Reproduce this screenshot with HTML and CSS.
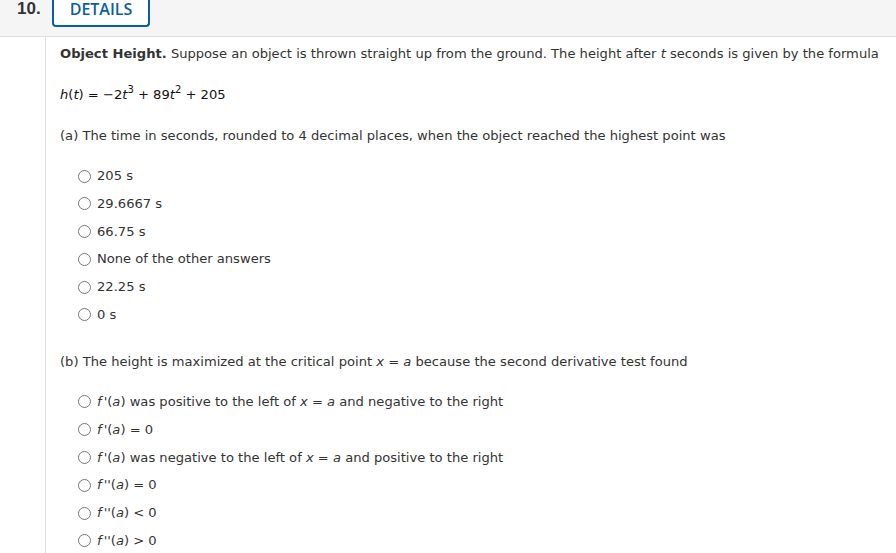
FILE: index.html
```html
<!DOCTYPE html>
<html>
<head>
<meta charset="utf-8">
<link rel="stylesheet" href="styles.css">
</head>
<body>
<div class="header">
  <span class="qnum">10.</span>
  <span class="details">DETAILS</span>
</div>
<div class="content">
  <p class="line first"><b>Object Height.</b> Suppose an object is thrown straight up from the ground. The height after <i>t</i> seconds is given by the formula</p>
  <p class="line formula"><i>h</i>(<i>t</i>) = −2<i>t</i><sup>3</sup> + 89<i>t</i><sup>2</sup> + 205</p>
  <p class="line part">(a) The time in seconds, rounded to 4 decimal places, when the object reached the highest point was</p>
  <ul class="opts">
    <li><span class="radio"></span><span class="label">205 s</span></li>
    <li><span class="radio"></span><span class="label">29.6667 s</span></li>
    <li><span class="radio"></span><span class="label">66.75 s</span></li>
    <li><span class="radio"></span><span class="label">None of the other answers</span></li>
    <li><span class="radio"></span><span class="label">22.25 s</span></li>
    <li><span class="radio"></span><span class="label">0 s</span></li>
  </ul>
  <p class="line part b">(b) The height is maximized at the critical point <i>x</i> = <i>a</i> because the second derivative test found</p>
  <ul class="opts">
    <li><span class="radio"></span><span class="label"><i class="fn">f</i>'(<i>a</i>) was positive to the left of <i>x</i> = <i>a</i> and negative to the right</span></li>
    <li><span class="radio"></span><span class="label"><i class="fn">f</i>'(<i>a</i>) = 0</span></li>
    <li><span class="radio"></span><span class="label"><i class="fn">f</i>'(<i>a</i>) was negative to the left of <i>x</i> = <i>a</i> and positive to the right</span></li>
    <li><span class="radio"></span><span class="label"><i class="fn">f</i>''(<i>a</i>) = 0</span></li>
    <li><span class="radio"></span><span class="label"><i class="fn">f</i>''(<i>a</i>) &lt; 0</span></li>
    <li><span class="radio"></span><span class="label"><i class="fn">f</i>''(<i>a</i>) &gt; 0</span></li>
  </ul>
</div>
</body>
</html>
```
FILE: styles.css
```css
html, body {
  margin: 0;
  padding: 0;
  background: #fff;
}
body {
  font-family: "DejaVu Sans", Verdana, sans-serif;
  color: #333;
  font-size: 13.1px;
  height: 553px;
  overflow: hidden;
}
.header {
  height: 36px;
  background: #f5f5f5;
  border-bottom: 1px solid #ddd;
  display: flex;
  align-items: flex-start;
}
.qnum {
  font-family: "Liberation Sans", Arial, sans-serif;
  font-weight: bold;
  font-size: 17px;
  line-height: 18px;
  color: #333;
  margin-left: 17px;
  width: 35px;
}
.details {
  font-family: "Open Sans", sans-serif;
  font-weight: 600;
  font-size: 16px;
  color: #0b5f9e;
  border: 2px solid #0b5f9e;
  border-top: none;
  border-radius: 0 0 4px 4px;
  height: 27px;
  box-sizing: border-box;
  width: 98px;
  text-align: center;
  line-height: 18px;
  background: #fff;
}
.content {
  margin-left: 45px;
  border-left: 1px solid #ddd;
  padding-left: 14px;
  padding-top: 8px;
  height: 600px;
}
.line {
  margin: 0;
  line-height: 18px;
}
.formula { margin-top: 23px; color: #111; }
.part { margin-top: 23px; }
.part.b { margin-top: 29px; }
sup { font-size: 10px; line-height: 0; vertical-align: 6px; }
.opts {
  list-style: none;
  margin: 22px 0 0 0;
  padding: 0 0 0 18px;
  display: flex;
  flex-direction: column;
  gap: 9.8px;
}
.opts li {
  display: flex;
  align-items: center;
  line-height: 18px;
}
.radio {
  width: 11px;
  height: 11px;
  border: 1px solid #777;
  border-radius: 50%;
  margin-right: 6px;
  flex: none;
}
.label { white-space: nowrap; }
.fn { margin-right: 2px; }
```
